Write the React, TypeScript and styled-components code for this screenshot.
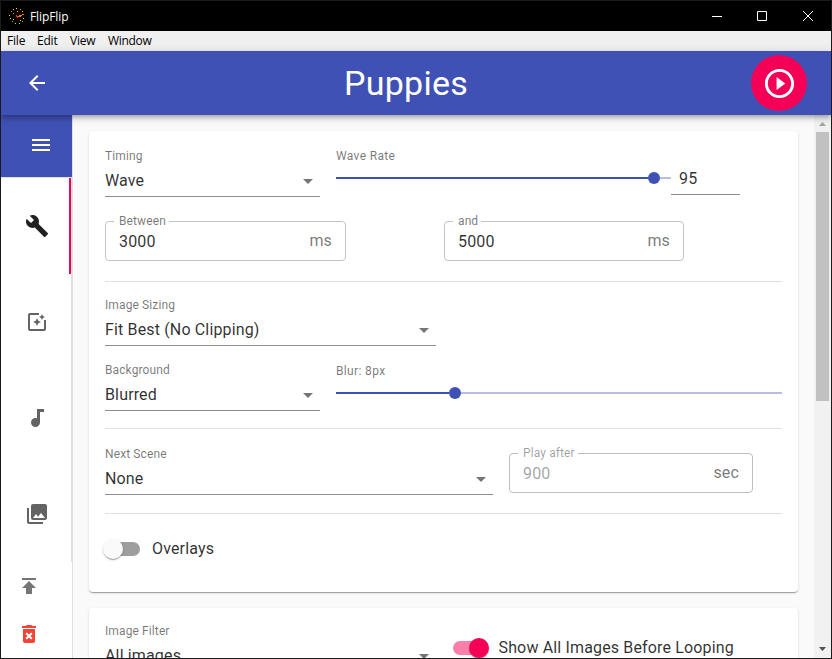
import React from "react";
import styled, { createGlobalStyle } from "styled-components";

const Global = createGlobalStyle`
  *, *::before, *::after { box-sizing: border-box; }
  html, body { margin: 0; height: 100%; overflow: hidden; }
  body { font-family: Roboto, "Liberation Sans", sans-serif; font-size: 16px; letter-spacing: 0.15px; color: rgba(0,0,0,.82); }
`;

const Frame = styled.div`
  width: 832px; height: 659px; border: 1px solid #1b1b1f;
  display: flex; flex-direction: column; overflow: hidden; background: #fafafa;
`;
const TitleBar = styled.header`
  height: 30px; flex: none; background: #000; color: #fff; display: flex; align-items: center;
  padding-left: 8px; font: 12px "Open Sans", sans-serif; letter-spacing: -0.1px;
`;
const TitleText = styled.span`margin-left: 5px; flex: 1;`;
const WindowButton = styled.span<{ $w?: number }>`
  width: ${p => p.$w ?? 45}px; height: 28px; display: flex; align-items: center; justify-content: center;
`;
const MenuBar = styled.nav`
  height: 20px; flex: none; background: #f0f0f0; color: #000; display: flex; align-items: center;
  padding: 0 0 1px 6px; gap: 12px; font: 12px "Open Sans", sans-serif;
`;
const MenuItem = styled.span<{ $w: number; $ls?: number }>`
  width: ${p => p.$w}px; letter-spacing: ${p => p.$ls ?? 0}px; white-space: nowrap;
`;
const AppBar = styled.div`
  height: 64px; flex: none; background: #3f51b5; color: #fff; display: flex; align-items: center;
  padding: 0 24px; z-index: 2; position: relative;
  box-shadow: 0 2px 4px -1px rgba(0,0,0,.2), 0 4px 5px rgba(0,0,0,.14), 0 1px 10px rgba(0,0,0,.12);
`;
const Title = styled.h1`
  margin: 0 0 0 12px; flex: 1; text-align: center; font-weight: 400; font-size: 34px; letter-spacing: 0.25px;
`;
const Fab = styled.button`
  width: 56px; height: 56px; border: 0; padding: 0; border-radius: 50%; background: #f50057; color: #fff;
  display: flex; align-items: center; justify-content: center;
`;
const Body = styled.div`flex: 1; min-height: 0; display: flex;`;
const Sidebar = styled.aside`
  width: 72px; flex: none; background: #fff; border-right: 1px solid #e0e0e0; display: flex; flex-direction: column;
`;
const DrawerHead = styled.div`
  height: 62px; flex: none; background: #3f51b5; color: #fff; display: flex; align-items: center;
  padding: 0 0 2px 28px;
`;
const Tabs = styled.div`
  height: 385px; flex: none; overflow: hidden; border-top: 1px solid #e0e0e0; border-right: 1px solid #e0e0e0;
`;
const Tab = styled.div<{ $active?: boolean }>`
  height: 96px; display: flex; align-items: center; justify-content: center;
  padding-left: ${p => (p.$active ? 3 : 1)}px;
  color: ${p => (p.$active ? "#212121" : "#636363")};
  border-right: ${p => (p.$active ? "2px solid #f50057" : "0")};
`;
const Tools = styled.div`padding: 12px 0 0 16px; display: flex; flex-direction: column; gap: 24px;`;
const Icon = styled.svg<{ $size?: number; $color?: string }>`
  width: ${p => p.$size ?? 24}px; height: ${p => p.$size ?? 24}px; fill: ${p => p.$color ?? "currentColor"};
  display: block; flex: none;
`;
const Content = styled.main`flex: 1; overflow: hidden; padding: 16px 16px 0;`;
const Card = styled.section<{ $top?: number }>`
  width: 709px; background: #fff; border-radius: 4px; padding: ${p => p.$top ?? 18}px 16px 24px; margin-bottom: 16px;
  box-shadow: 0 2px 1px -1px rgba(0,0,0,.2), 0 1px 1px rgba(0,0,0,.14), 0 1px 3px rgba(0,0,0,.12);
`;
const Row = styled.div<{ $top?: number; $gap?: number }>`
  display: flex; margin-top: ${p => p.$top ?? 0}px; gap: ${p => p.$gap ?? 16}px;
`;
const Divider = styled.hr<{ $top: number; $bottom: number }>`
  border: 0; height: 1px; background: #e0e0e0; margin: ${p => p.$top}px 0 ${p => p.$bottom}px;
`;
const Label = styled.div`
  font-size: 12px; line-height: 14px; height: 16px; letter-spacing: 0.11px; color: rgba(0,0,0,.54); white-space: nowrap;
`;
const Caption = styled(Label)<{ $line: number }>`
  line-height: ${p => p.$line}px; letter-spacing: 0.35px;
`;
const SelectRoot = styled.div<{ $w: number }>`
  width: ${p => p.$w}px; height: 48px; border-bottom: 1px solid #8d8d8d; flex: none;
`;
const SelectValue = styled.div`
  height: 31px; display: flex; align-items: center; justify-content: space-between; line-height: 19px;
`;
const SliderRoot = styled.div<{ $w: number }>`
  width: ${p => p.$w}px; flex: none; display: flex; flex-direction: column;
`;
const Track = styled.div<{ $top: number }>`
  height: 12px; margin-top: ${p => p.$top}px; display: flex; align-items: center;
`;
const Fill = styled.div<{ $w: number }>`width: ${p => p.$w}px; height: 2px; background: #3f51b5;`;
const Thumb = styled.div`width: 12px; height: 12px; border-radius: 50%; background: #3f51b5;`;
const Rail = styled.div`flex: 1; height: 2px; background: #b6bce2;`;
const NumberInput = styled.div`
  width: 69px; height: 46px; padding: 20px 8px 0; border-bottom: 1px solid #8d8d8d; line-height: 19px;
`;
const Outlined = styled.fieldset<{ $w: number; $disabled?: boolean }>`
  width: ${p => p.$w}px; height: 46px; margin: -6px 0 0; padding: 0 13px; min-width: 0;
  border: 1px solid ${p => (p.$disabled ? "#bdbdbd" : "#c4c4c4")}; border-radius: 4px;
  color: ${p => (p.$disabled ? "rgba(0,0,0,.38)" : "inherit")};
`;
const Legend = styled.legend<{ $disabled?: boolean }>`
  height: 12px; margin-left: -5px; padding: 0 3px 0 5px; font-size: 12px; line-height: 13px; letter-spacing: 0.11px;
  color: ${p => (p.$disabled ? "rgba(0,0,0,.38)" : "rgba(0,0,0,.54)")};
`;
const OutlinedValue = styled.div`
  display: flex; justify-content: space-between; line-height: 19px; padding-top: 5px;
`;
const Unit = styled.span`color: rgba(0,0,0,.54); margin-top: -1px;`;
const Switch = styled.label<{ $top?: number }>`
  height: 38px; margin-top: ${p => p.$top ?? 0}px; display: flex; align-items: center; white-space: nowrap;
`;
const SwitchText = styled.span`padding-bottom: 2px;`;
const SwitchTrack = styled.span<{ $on?: boolean }>`
  width: 34px; height: 14px; margin: 0 ${p => (p.$on ? 11.5 : 12)}px 0 1px; border-radius: 7px; display: flex; align-items: center;
  justify-content: ${p => (p.$on ? "flex-end" : "flex-start")};
  background: ${p => (p.$on ? "#fa80ab" : "#9e9e9e")};
`;
const SwitchThumb = styled.span<{ $on?: boolean }>`
  width: 20px; height: 20px; border-radius: 50%; margin: 0 ${p => (p.$on ? -2 : 0)}px 0 ${p => (p.$on ? 0 : -3)}px; flex: none;
  background: ${p => (p.$on ? "#f50057" : "#fafafa")};
  box-shadow: 0 2px 1px -1px rgba(0,0,0,.2), 0 1px 1px rgba(0,0,0,.14), 0 1px 3px rgba(0,0,0,.12);
`;
const Scrollbar = styled.div`
  width: 17px; flex: none; background: #f1f1f1; display: flex; flex-direction: column; align-items: center;
  justify-content: space-between; padding: 7px 0 7px;
`;
const ScrollThumb = styled.div`width: 13px; height: 269px; background: #c1c1c1; margin: 6px 0 auto;`;

const paths = {
  back: "M20 11H7.83l5.59-5.59L12 4l-8 8 8 8 1.41-1.41L7.83 13H20v-2z",
  play: "M10 16.5l6-4.5-6-4.5v9zM12 2C6.48 2 2 6.48 2 12s4.48 10 10 10 10-4.48 10-10S17.52 2 12 2zm0 18c-4.41 0-8-3.59-8-8s3.59-8 8-8 8 3.59 8 8-3.59 8-8 8z",
  menu: "M3 18h18v-2H3v2zm0-5h18v-2H3v2zm0-7v2h18V6H3z",
  build: "M22.7 19l-9.1-9.1c.9-2.3.4-5-1.5-6.9-2-2-5-2.4-7.4-1.3L9 6 6 9 1.6 4.7C.4 7.1.9 10.1 2.9 12.1c1.9 1.9 4.6 2.4 6.9 1.5l9.1 9.1c.4.4 1 .4 1.4 0l2.3-2.3c.5-.4.5-1.1.1-1.4z",
  filter: "M19.02 10v9H5V5h9V3H5.02c-1.1 0-2 .9-2 2v14c0 1.1.9 2 2 2H19c1.1 0 2-.9 2-2v-9h-1.98zM17 10l.94-2.06L20 7l-2.06-.94L17 4l-.94 2.06L14 7l2.06.94L17 10zm-3.75.75L12 8l-1.25 2.75L8 12l2.75 1.25L12 16l1.25-2.75L16 12l-2.75-1.25z",
  audio: "M12 3v9.28c-.47-.17-.97-.28-1.5-.28C8.01 12 6 14.01 6 16.5S8.01 21 10.5 21c2.31 0 4.2-1.75 4.45-4H15V6h4V3h-7z",
  collections: "M22 16V4c0-1.1-.9-2-2-2H8c-1.1 0-2 .9-2 2v12c0 1.1.9 2 2 2h12c1.1 0 2-.9 2-2zm-11-4l2.03 2.71L16 11l4 5H8l3-4zM2 6v14c0 1.1.9 2 2 2h14v-2H4V6H2z",
  publish: "M5 4v2h14V4H5zm0 10h4v6h6v-6h4l-7-7-7 7z",
  trash: "M6 19c0 1.1.9 2 2 2h8c1.1 0 2-.9 2-2V7H6v12zm2.46-7.12l1.41-1.41L12 12.59l2.12-2.12 1.41 1.41L13.41 14l2.12 2.12-1.41 1.41L12 15.41l-2.12 2.12-1.41-1.41L10.59 14l-2.13-2.12zM15.5 4l-1-1h-5l-1 1H5v2h14V4z",
  drop: "M7 10l5 5 5-5z",
};

function Glyph({ name, size, color }: { name: keyof typeof paths; size?: number; color?: string }) {
  return <Icon viewBox="0 0 24 24" $size={size} $color={color}><path d={paths[name]} /></Icon>;
}

function Select({ label, value, width }: { label: string; value: string; width: number }) {
  return (
    <SelectRoot $w={width}>
      <Label>{label}</Label>
      <SelectValue>{value}<Glyph name="drop" color="#757575" /></SelectValue>
    </SelectRoot>
  );
}

function Slider({ label, width, fill, top, line }: { label: string; width: number; fill: number; top: number; line: number }) {
  return (
    <SliderRoot $w={width}>
      <Caption $line={line}>{label}</Caption>
      <Track $top={top}><Fill $w={fill} /><Thumb /><Rail /></Track>
    </SliderRoot>
  );
}

function Field({ label, value, unit, width, disabled }: { label: string; value: string; unit: string; width: number; disabled?: boolean }) {
  return (
    <Outlined $w={width} $disabled={disabled}>
      <Legend $disabled={disabled}>{label}</Legend>
      <OutlinedValue><span>{value}</span><Unit>{unit}</Unit></OutlinedValue>
    </Outlined>
  );
}

function Toggle({ label, on, top }: { label: string; on?: boolean; top?: number }) {
  return (
    <Switch $top={top}>
      <SwitchTrack $on={on}><SwitchThumb $on={on} /></SwitchTrack>
      <SwitchText>{label}</SwitchText>
    </Switch>
  );
}

const logoDots = [
  [7, 0], [11, 1], [4, 1], [13, 3], [2, 3], [0, 7], [1, 10], [3, 13], [6, 15], [10, 15], [13, 13], [14, 10], [8, 3], [4, 5], [4, 11], [11, 12],
];

function Logo() {
  return (
    <Icon viewBox="0 0 16 16" $size={16}>
      {logoDots.map(([x, y], i) => (
        <rect key={i} x={x} y={y} width="1" height="1" fill={i % 3 === 1 ? "#f08a24" : "#ffd22e"} />
      ))}
      <path d="M10 7h3v1h-3zM13 6h2v1h-2zM9 8h3v1H9z" fill="#f47a20" />
      <path d="M7 7h1v1h1v2H8V9H7z" fill="#d8321c" />
    </Icon>
  );
}

export default function App() {
  return (
    <>
      <Global />
      <Frame>
        <TitleBar>
          <Logo />
          <TitleText>FlipFlip</TitleText>
          <WindowButton><svg width="10" height="10"><path d="M0 5.5h10" stroke="#fff" /></svg></WindowButton>
          <WindowButton><svg width="10" height="10"><path d="M.5.5h9v9h-9z" stroke="#fff" fill="none" /></svg></WindowButton>
          <WindowButton $w={47}><svg width="10" height="10"><path d="M0 0l10 10M10 0L0 10" stroke="#fff" /></svg></WindowButton>
        </TitleBar>
        <MenuBar>
          <MenuItem $w={18} $ls={-0.2}>File</MenuItem>
          <MenuItem $w={21} $ls={-0.2}>Edit</MenuItem>
          <MenuItem $w={26} $ls={-0.2}>View</MenuItem>
          <MenuItem $w={46} $ls={-0.3}>Window</MenuItem>
        </MenuBar>
        <AppBar>
          <Glyph name="back" />
          <Title>Puppies</Title>
          <Fab><Glyph name="play" size={35} /></Fab>
        </AppBar>
        <Body>
          <Sidebar>
            <DrawerHead><Glyph name="menu" /></DrawerHead>
            <Tabs>
              <Tab $active><Glyph name="build" /></Tab>
              <Tab><Glyph name="filter" /></Tab>
              <Tab><Glyph name="audio" /></Tab>
              <Tab><Glyph name="collections" /></Tab>
            </Tabs>
            <Tools>
              <Glyph name="publish" color="#757575" />
              <Glyph name="trash" color="#f44336" />
            </Tools>
          </Sidebar>
          <Content>
            <Card>
              <Row>
                <Select label="Timing" value="Wave" width={215} />
                <Row $gap={0}>
                  <Slider label="Wave Rate" width={335} fill={312} top={7} line={14} />
                  <NumberInput>95</NumberInput>
                </Row>
              </Row>
              <Row $top={24} $gap={98}>
                <Field label="Between" value="3000" unit="ms" width={241} />
                <Field label="and" value="5000" unit="ms" width={240} />
              </Row>
              <Divider $top={20} $bottom={16} />
              <Select label="Image Sizing" value="Fit Best (No Clipping)" width={331} />
              <Row $top={17}>
                <Select label="Background" value="Blurred" width={215} />
                <Slider label="Blur: 8px" width={446} fill={113} top={8} line={16} />
              </Row>
              <Divider $top={17} $bottom={18} />
              <Row>
                <Select label="Next Scene" value="None" width={388} />
                <Row $top={6}>
                  <Field label="Play after" value="900" unit="sec" width={244} disabled />
                </Row>
              </Row>
              <Divider $top={18} $bottom={16} />
              <Toggle label="Overlays" />
            </Card>
            <Card $top={16}>
              <Row>
                <Select label="Image Filter" value="All images" width={331} />
                <Toggle label="Show All Images Before Looping" on top={5} />
              </Row>
            </Card>
          </Content>
          <Scrollbar>
            <svg width="7" height="4"><path d="M0 4L3.5 0 7 4z" fill="#a3a3a3" /></svg>
            <ScrollThumb />
            <svg width="7" height="4"><path d="M0 0L3.5 4 7 0z" fill="#505050" /></svg>
          </Scrollbar>
        </Body>
      </Frame>
    </>
  );
}
